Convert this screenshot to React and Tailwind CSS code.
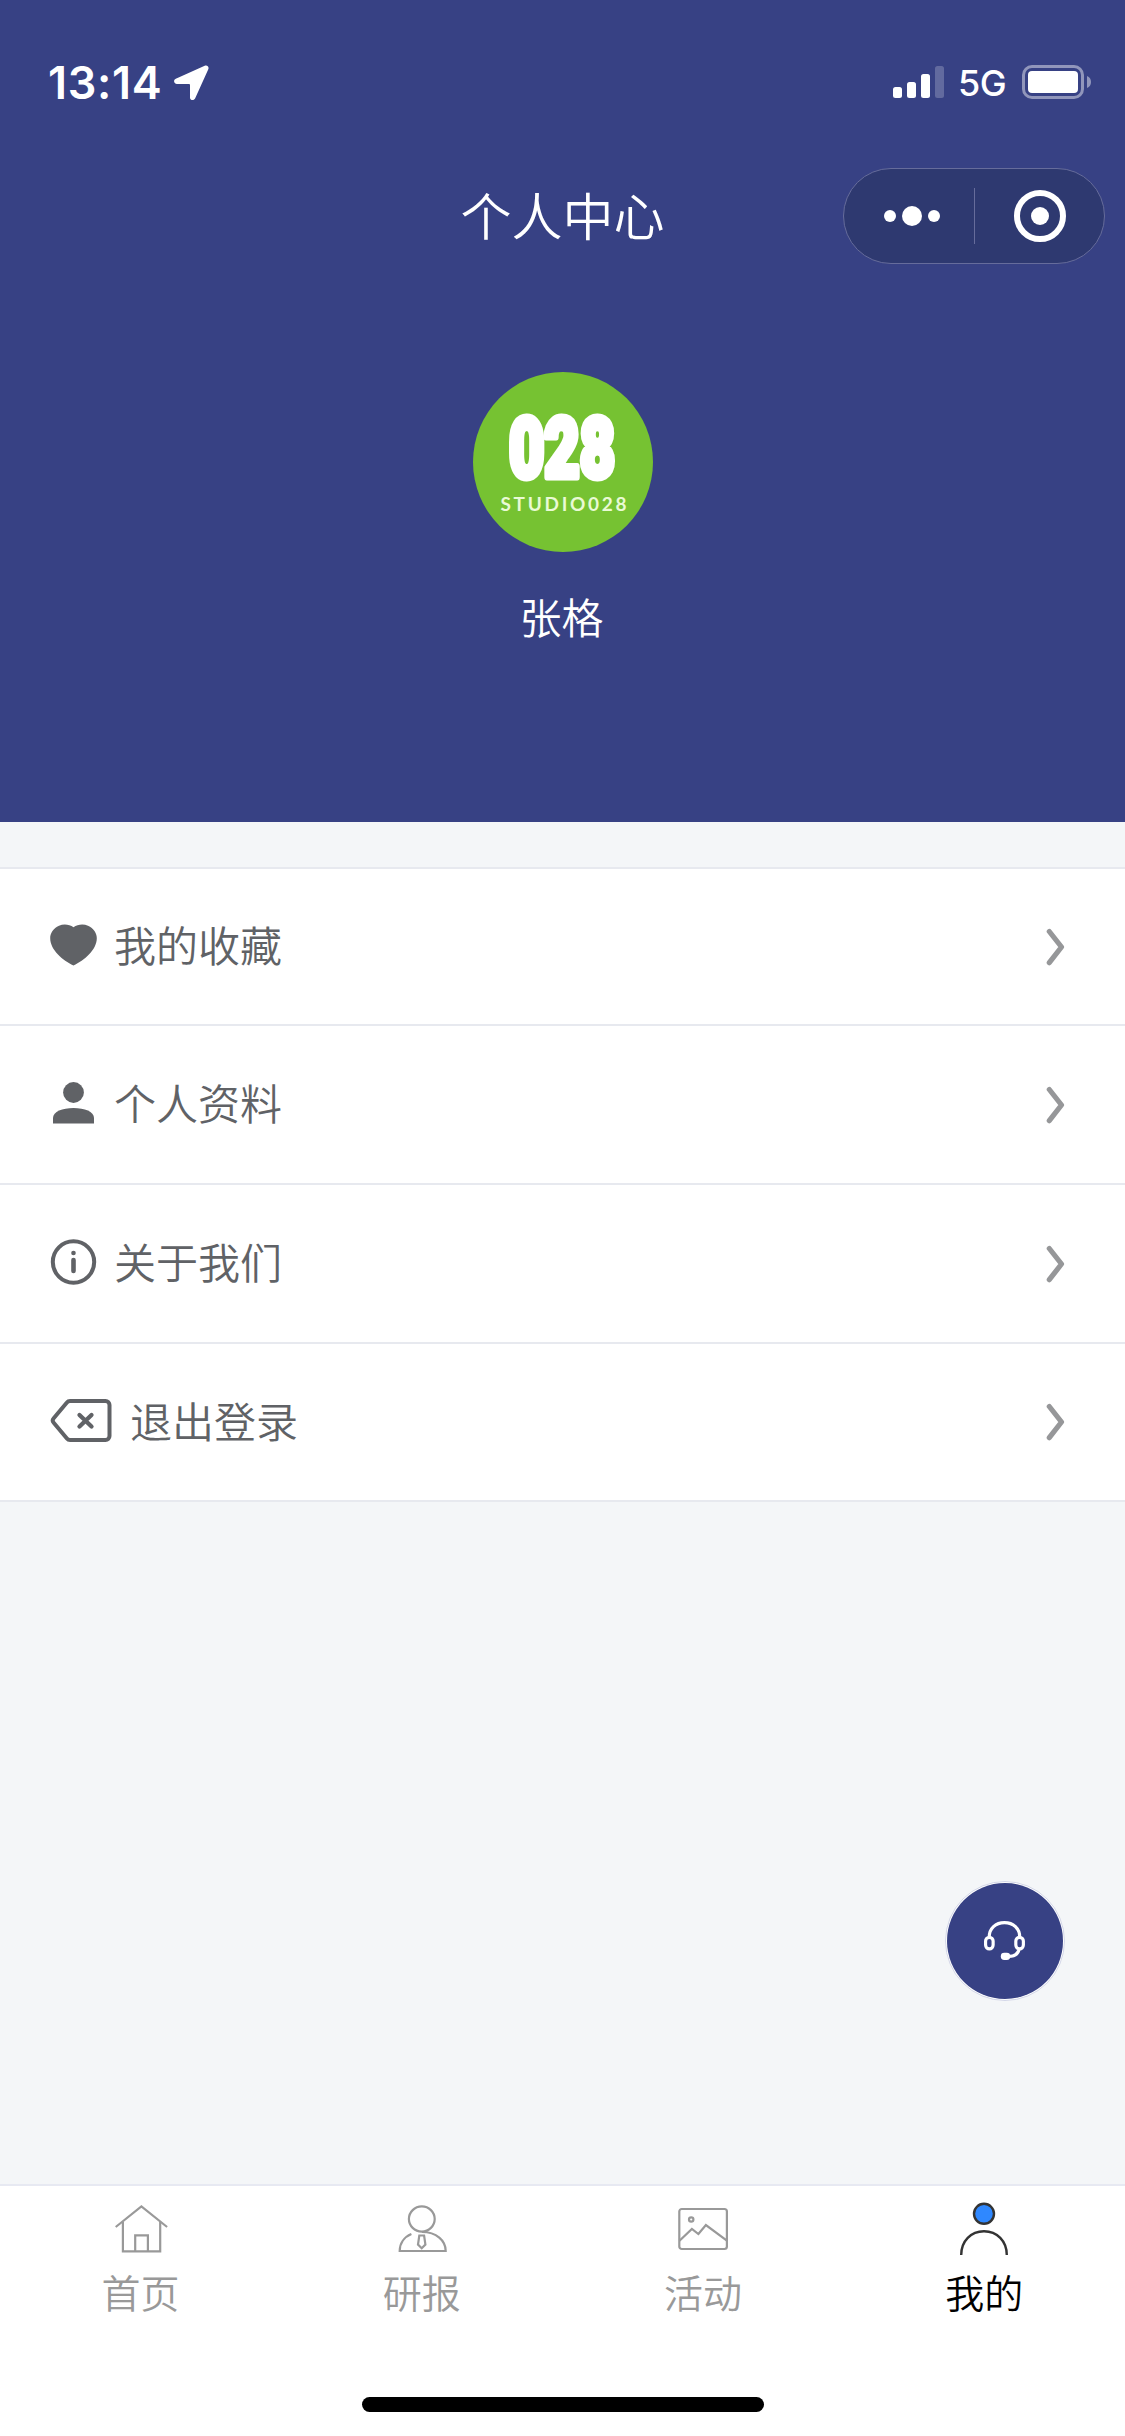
import React from "react";

const Heart = () => (
  <svg width="47" height="42" viewBox="0 0 47 42" fill="currentColor">
    <path d="M23.5 3.300C27.500.2 33.500-.3 38 1.700c5.600 2.400 8.800 7.300 8.800 12.500 0 11.500-12.500 22.100-23.300 27.300C12.700 36.300.2 25.700.2 14.200.2 9 3.400 4.100 9 1.700c4.500-2 10.500-1.500 14.500 1.600z" />
  </svg>
);

const Person = () => (
  <svg width="47" height="42" viewBox="0 0 47 42" fill="currentColor">
    <circle cx="23.500" cy="10.500" r="10.400" />
    <path d="M3 41.500V36c0-6.500 9.500-10 20.500-10S44 29.500 44 36v5.500z" />
  </svg>
);

const Info = () => (
  <svg width="47" height="46" viewBox="0 0 47 46" fill="none" stroke="currentColor">
    <circle cx="23.500" cy="23" r="20.700" strokeWidth="4" />
    <circle cx="23.500" cy="14" r="2.300" fill="currentColor" stroke="none" />
    <path d="M23.500 21v11" strokeWidth="4.600" strokeLinecap="round" />
  </svg>
);

const Exit = () => (
  <svg width="62" height="43" viewBox="-1 0 62 43" fill="none" stroke="currentColor" strokeWidth="4">
    <path d="M19 2h35.500c2.200 0 4 1.800 4 4v31c0 2.200-1.800 4-4 4H19c-1.300 0-2.300-.5-3.100-1.500L2.700 23.800c-1.200-1.400-1.200-3.200 0-4.600L15.900 3.500C16.700 2.500 17.700 2 19 2z" />
    <path d="M28.500 16l12 11.500M40.500 16l-12 11.500" strokeWidth="4.300" strokeLinecap="round" />
  </svg>
);

const Chevron = () => (
  <svg width="19" height="38" viewBox="0 0 19 38" fill="none" stroke="#969799" strokeWidth="5.200" strokeLinecap="round" strokeLinejoin="round">
    <path d="M3.300 3.500L15.500 19 3.300 34.700" />
  </svg>
);

const HomeTab = () => (
  <svg width="56" height="56" viewBox="0 0 56 56" fill="none" stroke="#999" strokeWidth="2.200">
    <path d="M2.700 27L28.400 6.500 54.100 27" />
    <path d="M9.900 22v29.300h37.300V22" />
    <path d="M22.200 51.300V35.300h12.700v16" />
  </svg>
);

const ReportTab = () => (
  <svg width="56" height="56" viewBox="0 0 56 56" fill="none" stroke="#999" strokeWidth="2.200">
    <ellipse cx="27.800" cy="19" rx="12.900" ry="12.600" />
    <path d="M17.400 34C10 37 5.700 43.500 5.700 51h46C51.700 40.500 42.500 32 28 32" />
    <path d="M25.300 35.500h4.800l1.300 9-3.700 3.700-3.700-3.700z" />
  </svg>
);

const EventTab = () => (
  <svg width="56" height="56" viewBox="0 0 56 56" fill="none" stroke="#999" strokeWidth="2.200">
    <rect x="4.300" y="9" width="47.600" height="40" rx="2.500" />
    <circle cx="16.200" cy="19.500" r="2.200" />
    <path d="M4.500 40.700L16.900 29l6.500 5 7.500-9 21 15.700" />
  </svg>
);

const MineTab = () => (
  <svg width="56" height="56" viewBox="0 0 56 56" fill="none" stroke="#333" strokeWidth="2.400">
    <circle cx="28" cy="13.800" r="10" fill="#2f88ff" />
    <path d="M5.200 55C5.200 41 15 31.200 28 31.200S50.800 41 50.800 55" />
  </svg>
);

const ITEMS = [
  { label: "我的收藏", Icon: Heart, cls: "h-[157px]", gap: "ml-[17px]" },
  { label: "个人资料", Icon: Person, cls: "h-[159px]", gap: "ml-[17px]" },
  { label: "关于我们", Icon: Info, cls: "h-[159px]", gap: "ml-[17px]" },
  { label: "退出登录", Icon: Exit, cls: "h-[158px]", gap: "ml-[18px]" },
];

const TABS = [
  { label: "首页", Icon: HomeTab },
  { label: "研报", Icon: ReportTab },
  { label: "活动", Icon: EventTab },
  { label: "我的", Icon: MineTab, active: true },
];

function StatusBar() {
  return (
    <div className="flex h-[164px] items-start justify-between pl-[48px] pr-[33px] pt-[64px]">
      <div className="flex items-start">
        <span className="w-[126px] whitespace-nowrap font-['Inter'] text-[45px] font-semibold leading-[37px] tracking-[0.7px]">13:14</span>
        <svg width="35" height="36" viewBox="0 0 35 36" fill="white" className="mt-px">
          <path d="M30.700.8c2.400-1.100 4.600 1 3.600 3.400L21.200 33.300c-1.300 2.800-5.200 2.100-5.200-.9V20.200c0-.8-.4-1.200-1.200-1.200H3c-3.200 0-4-3.900-1.200-5.200z" />
        </svg>
      </div>
      <div className="flex items-start">
        <svg width="51" height="36" viewBox="0 0 51 36" fill="white">
          <rect x="0" y="23" width="9" height="11" rx="2.500" />
          <rect x="14" y="18" width="9" height="16" rx="2.500" />
          <rect x="28" y="10" width="9" height="24" rx="2.500" />
          <rect x="42" y="2" width="9" height="32" rx="2.500" opacity=".22" />
        </svg>
        <span className="ml-[14px] w-[64px] whitespace-nowrap font-['Inter'] text-[36px] font-[450] leading-[39px] tracking-[-0.5px]">5G</span>
        <svg width="70" height="36" viewBox="0 0 70 36">
          <rect x="1.500" y="2.500" width="59" height="31" rx="8.500" fill="none" stroke="white" strokeOpacity=".45" strokeWidth="3" />
          <rect x="6" y="7" width="50" height="22" rx="4" fill="white" />
          <path d="M65 12c2.700 1 4 3.200 4 6s-1.300 5-4 6z" fill="white" opacity=".45" />
        </svg>
      </div>
    </div>
  );
}

function Capsule() {
  return (
    <div className="flex h-[96px] w-[262px] items-center rounded-full border border-[#666c9b] bg-[#2e3970]">
      <div className="flex w-[130px] items-center justify-center gap-[6px] pl-[5px]">
        <i className="size-[12px] rounded-full bg-white" />
        <i className="size-[20px] rounded-full bg-white" />
        <i className="size-[12px] rounded-full bg-white" />
      </div>
      <div className="h-[56px] w-px bg-[#666c9b]" />
      <div className="flex flex-1 justify-center">
        <div className="flex size-[52px] items-center justify-center rounded-full border-6 border-white">
          <i className="size-[18px] rounded-full bg-white" />
        </div>
      </div>
    </div>
  );
}

function Avatar() {
  return (
    <svg width="180" height="180" viewBox="0 0 180 180">
      <circle cx="90" cy="90" r="90" fill="#76c232" />
      <text x="36" y="105" textLength="106" lengthAdjust="spacingAndGlyphs" fill="#fff" stroke="#fff" strokeWidth="7" strokeLinejoin="round" fontFamily="Roboto, sans-serif" fontWeight="900" fontSize="84">028</text>
      <text x="27.500" y="139" textLength="126" fill="#e9fad5" fontFamily="Lato, sans-serif" fontWeight="700" fontSize="19">STUDIO028</text>
    </svg>
  );
}

export default function App() {
  return (
    <div className="relative flex h-[2436px] w-[1125px] flex-col overflow-hidden bg-[#f4f6f8] font-['Noto_Sans_CJK_SC',sans-serif] font-[350]">
      <header className="h-[822px] bg-[#374184] text-white">
        <StatusBar />
        <div className="grid h-[104px] grid-cols-[1fr_auto_1fr] items-center pr-[20px] pl-[20px]">
          <span />
          <h1 className="pb-[5px] text-[51px] leading-[60px]">个人中心</h1>
          <div className="flex justify-end">
            <Capsule />
          </div>
        </div>
        <div className="flex flex-col items-center pt-[104px]">
          <Avatar />
          <p className="mt-[34px] pr-[2px] text-[42px] leading-[60px]">张格</p>
        </div>
      </header>

      <main className="mt-[45px] border-t-2 border-[#e7e9ef] bg-white">
        {ITEMS.map(({ label, Icon, cls, gap }) => (
          <div key={label} className={`flex items-center border-b-2 border-[#e7e9ef] pl-[50px] pr-[60px] text-[#606266] ${cls}`}>
            <div className="pb-[4px]">
              <Icon />
            </div>
            <span className={`flex-1 pb-[5px] text-[42px] leading-[60px] ${gap}`}>{label}</span>
            <Chevron />
          </div>
        ))}
      </main>

      <button className="absolute left-[945px] top-[1881px] flex size-[120px] items-center justify-center rounded-full border border-[#d3d6e8] bg-white p-px">
        <span className="flex size-full items-center justify-center rounded-full bg-[#374184]">
          <svg width="42" height="42" viewBox="0.5 0 40 40" fill="none" stroke="white" strokeWidth="3">
            <path d="M5.500 16C5.500 8 11.500 2.500 20 2.500S34.500 8 34.500 16" />
            <rect x="2" y="16.500" width="7.200" height="11" rx="3.600" />
            <rect x="30.800" y="16.500" width="7.200" height="11" rx="3.600" />
            <path d="M34 27.500c-.8 4-3.800 7.200-10 7.200" />
            <rect x="16.500" y="31.300" width="9" height="6.700" rx="3.300" fill="white" stroke="none" />
          </svg>
        </span>
      </button>

      <footer className="mt-auto flex h-[252px] flex-col items-center border-t-2 border-[#e7e9f2] bg-white">
        <nav className="grid w-full grid-cols-4 pt-[14px]">
          {TABS.map(({ label, Icon, active }) => (
            <div key={label} className={`flex flex-col items-center ${active ? "text-black" : "text-[#999]"}`}>
              <Icon />
              <span className="mt-[8px] text-[39px] leading-[54px]">{label}</span>
            </div>
          ))}
        </nav>
        <div className="mb-[24px] mt-auto h-[15px] w-[402px] rounded-full bg-black" />
      </footer>
    </div>
  );
}
